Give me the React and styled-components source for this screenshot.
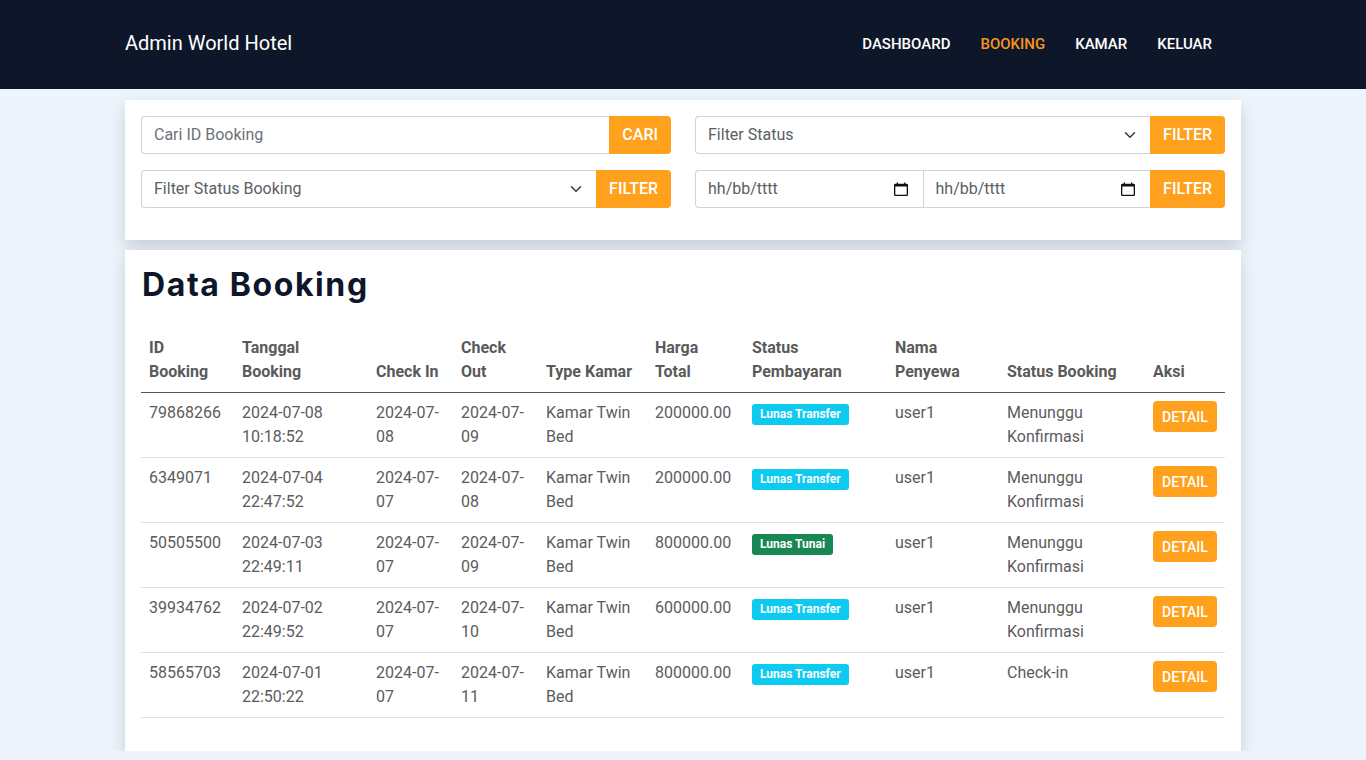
import React from "react";
import styled, { createGlobalStyle } from "styled-components";

const GlobalStyle = createGlobalStyle`
  * { box-sizing: border-box; }
  body {
    margin: 0;
    font-family: Roboto, "Liberation Sans", sans-serif;
    background: #eef4fb;
    color: #5c5c5c;
  }
`;

const ORANGE = "#ffa11c";

const bookings = [
  { id: "79868266", date: "2024-07-08", time: "10:18:52", cin: "2024-07-08", cout: "2024-07-09", price: "200000.00", pay: "transfer", status: ["Menunggu", "Konfirmasi"] },
  { id: "6349071", date: "2024-07-04", time: "22:47:52", cin: "2024-07-07", cout: "2024-07-08", price: "200000.00", pay: "transfer", status: ["Menunggu", "Konfirmasi"] },
  { id: "50505500", date: "2024-07-03", time: "22:49:11", cin: "2024-07-07", cout: "2024-07-09", price: "800000.00", pay: "tunai", status: ["Menunggu", "Konfirmasi"] },
  { id: "39934762", date: "2024-07-02", time: "22:49:52", cin: "2024-07-07", cout: "2024-07-10", price: "600000.00", pay: "transfer", status: ["Menunggu", "Konfirmasi"] },
  { id: "58565703", date: "2024-07-01", time: "22:50:22", cin: "2024-07-07", cout: "2024-07-11", price: "800000.00", pay: "transfer", status: ["Check-in"] },
];

const columns = [93, 134, 85, 85, 109, 97, 143, 112, 146, 80];

const splitDate = (d) => {
  const parts = d.split("-");
  return [parts[0] + "-" + parts[1] + "-", parts[2]];
};

const Chevron = () => (
  <svg width="12" height="12" viewBox="0 0 16 16" fill="none" stroke="#343a40" strokeWidth="2" strokeLinecap="round" strokeLinejoin="round">
    <path d="M2 5l6 6 6-6" />
  </svg>
);

const Calendar = () => (
  <svg width="14" height="14" viewBox="0 0 16 16" fill="#111">
    <path d="M3 0.5h1.5V2h7V0.5H13V2h1.5A1.5 1.5 0 0 1 16 3.5v11A1.5 1.5 0 0 1 14.5 16h-13A1.5 1.5 0 0 1 0 14.5v-11A1.5 1.5 0 0 1 1.5 2H3zM1.5 5v9.5h13V5z" />
  </svg>
);

export default function App() {
  return (
    <>
      <GlobalStyle />
      <Nav>
        <Container>
          <NavInner>
            <Brand>Admin World Hotel</Brand>
            <Menu>
              <MenuLink href="#">DASHBOARD</MenuLink>
              <MenuLink href="#" active>BOOKING</MenuLink>
              <MenuLink href="#">KAMAR</MenuLink>
              <MenuLink href="#">KELUAR</MenuLink>
            </Menu>
          </NavInner>
        </Container>
      </Nav>

      <Container>
        <FilterCard>
          <FilterGrid>
            <Group>
              <TextInput placeholder="Cari ID Booking" />
              <Button>CARI</Button>
            </Group>
            <Group>
              <SelectBox>
                <span>Filter Status</span>
                <Chevron />
              </SelectBox>
              <Button>FILTER</Button>
            </Group>
            <Group>
              <SelectBox>
                <span>Filter Status Booking</span>
                <Chevron />
              </SelectBox>
              <Button>FILTER</Button>
            </Group>
            <Group>
              <DateBox>
                <span>hh/bb/tttt</span>
                <Calendar />
              </DateBox>
              <DateBox second>
                <span>hh/bb/tttt</span>
                <Calendar />
              </DateBox>
              <Button>FILTER</Button>
            </Group>
          </FilterGrid>
        </FilterCard>

        <DataCard>
          <Title>Data Booking</Title>
          <Table>
            <colgroup>
              {columns.map((w, i) => (
                <col key={i} style={{ width: w }} />
              ))}
            </colgroup>
            <thead>
              <tr>
                <Th>ID<br />Booking</Th>
                <Th>Tanggal<br />Booking</Th>
                <Th>Check In</Th>
                <Th>Check<br />Out</Th>
                <Th>Type Kamar</Th>
                <Th>Harga<br />Total</Th>
                <Th>Status<br />Pembayaran</Th>
                <Th>Nama<br />Penyewa</Th>
                <Th>Status Booking</Th>
                <Th>Aksi</Th>
              </tr>
            </thead>
            <tbody>
              {bookings.map((b) => {
                const cin = splitDate(b.cin);
                const cout = splitDate(b.cout);
                return (
                  <tr key={b.id}>
                    <Td>{b.id}</Td>
                    <Td>{b.date}<br />{b.time}</Td>
                    <Td>{cin[0]}<br />{cin[1]}</Td>
                    <Td>{cout[0]}<br />{cout[1]}</Td>
                    <Td>Kamar Twin<br />Bed</Td>
                    <Td>{b.price}</Td>
                    <Td>
                      <Badge tunai={b.pay === "tunai"}>
                        {b.pay === "tunai" ? "Lunas Tunai" : "Lunas Transfer"}
                      </Badge>
                    </Td>
                    <Td>user1</Td>
                    <Td>
                      {b.status.map((s, i) => (
                        <React.Fragment key={i}>
                          {i > 0 && <br />}
                          {s}
                        </React.Fragment>
                      ))}
                    </Td>
                    <Td>
                      <DetailButton>DETAIL</DetailButton>
                    </Td>
                  </tr>
                );
              })}
            </tbody>
          </Table>
        </DataCard>
      </Container>
    </>
  );
}

const Nav = styled.nav`
  background: #0e1729;
  height: 89px;
  display: flex;
  align-items: center;
`;

const Container = styled.div`
  width: 1116px;
  margin: 0 auto;
`;

const NavInner = styled.div`
  display: flex;
  align-items: center;
  justify-content: space-between;
`;

const Brand = styled.a`
  color: #fff;
  font-size: 20px;
  line-height: 30px;
  margin-top: -4px;
`;

const Menu = styled.div`
  display: flex;
  margin-right: 14px;
  margin-top: -2px;
`;

const MenuLink = styled.a`
  padding: 0 15px;
  font-size: 15px;
  font-weight: 500;
  text-decoration: none;
  color: ${({ active }) => (active ? "#f7941d" : "#fff")};
`;

const Card = styled.div`
  background: #fff;
  box-shadow: 0 8px 16px rgba(30, 45, 70, 0.18);
`;

const FilterCard = styled(Card)`
  margin-top: 11px;
  padding: 16px 16px 32px;
`;

const FilterGrid = styled.div`
  display: grid;
  grid-template-columns: 1fr 1fr;
  column-gap: 24px;
  row-gap: 16px;
`;

const Group = styled.div`
  display: flex;
  height: 38px;
`;

const field = `
  flex: 1;
  min-width: 0;
  height: 38px;
  border: 1px solid #ced4da;
  border-right: none;
  font-family: Roboto, "Liberation Sans", sans-serif;
  font-size: 16px;
  color: #5f6368;
  padding: 0 12px;
`;

const TextInput = styled.input`
  ${field}
  border-radius: 4px 0 0 4px;
  outline: none;
  padding-bottom: 1px;
  &::placeholder {
    color: #6c727a;
  }
`;

const SelectBox = styled.div`
  ${field}
  border-radius: 4px 0 0 4px;
  display: flex;
  align-items: center;
  justify-content: space-between;
  padding-right: 14px;
  padding-bottom: 1px;
  color: #595f66;
`;

const DateBox = styled.div`
  ${field}
  border-radius: ${({ second }) => (second ? "0" : "4px 0 0 4px")};
  display: flex;
  align-items: center;
  justify-content: space-between;
  padding-right: 15px;
  padding-bottom: 1px;
  color: #595f66;
`;

const Button = styled.button`
  border: none;
  background: ${ORANGE};
  color: #fff;
  font-family: Roboto, "Liberation Sans", sans-serif;
  font-size: 16px;
  font-weight: 500;
  padding: 0 13px 1px;
  border-radius: 0 4px 4px 0;
`;

const DataCard = styled(Card)`
  margin-top: 10px;
  padding: 16px 16px 17px;
`;

const Title = styled.h2`
  margin: 0 0 24px 1px;
  font-family: Inter, "Noto Sans", sans-serif;
  font-weight: 700;
  font-size: 32px;
  line-height: 38px;
  letter-spacing: 1.6px;
  color: #0e1729;
`;

const Table = styled.table`
  width: 100%;
  table-layout: fixed;
  border-collapse: collapse;
  margin-bottom: 16px;
`;

const Th = styled.th`
  text-align: left;
  vertical-align: bottom;
  padding: 8px;
  font-size: 16px;
  font-weight: 700;
  line-height: 24px;
  color: #5a5a5a;
  border-bottom: 1px solid #555;
`;

const Td = styled.td`
  vertical-align: top;
  padding: 8px;
  font-size: 16px;
  line-height: 24px;
  color: #5c5c5c;
  border-bottom: 1px solid #dee2e6;
`;

const Badge = styled.span`
  display: inline-block;
  margin-top: 3px;
  padding: 4px 8px;
  font-size: 12px;
  font-weight: 700;
  line-height: 13px;
  border-radius: 3px;
  color: #fff;
  background: ${({ tunai }) => (tunai ? "#198754" : "#0dcaf0")};
  vertical-align: top;
`;

const DetailButton = styled.button`
  border: none;
  background: ${ORANGE};
  color: #fff;
  font-family: Roboto, "Liberation Sans", sans-serif;
  font-size: 14px;
  font-weight: 500;
  height: 31px;
  padding: 0 9px;
  border-radius: 4px;
`;
